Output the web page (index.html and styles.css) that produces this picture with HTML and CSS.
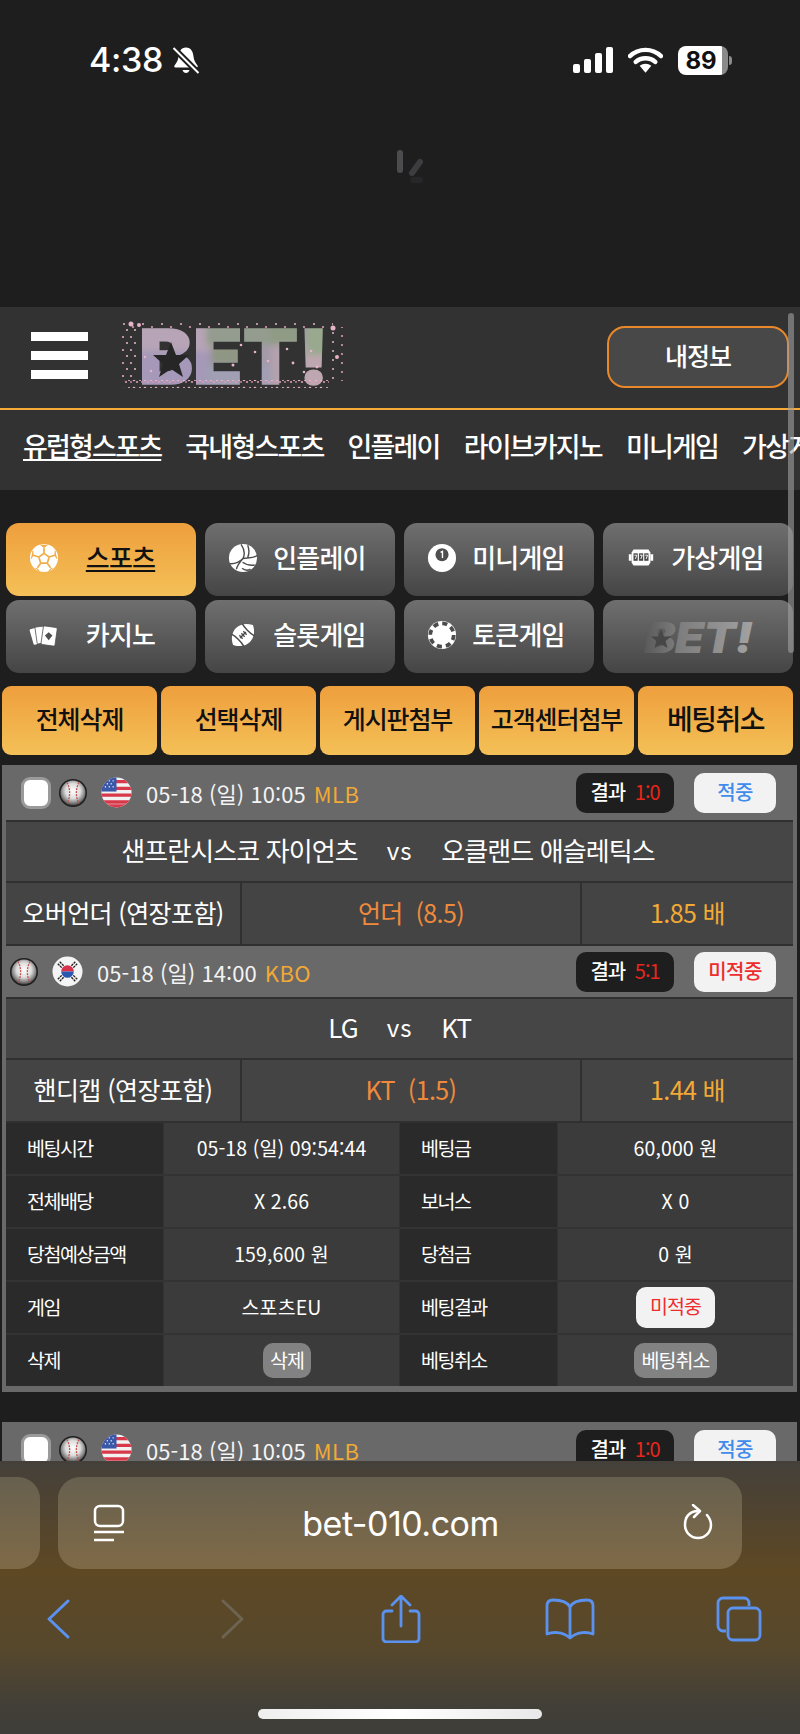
FILE: index.html
```html
<!DOCTYPE html>
<html lang="ko">
<head>
<meta charset="utf-8">
<title>BET</title>
<link rel="stylesheet" href="styles.css">
</head>
<body>
<svg class="defs" width="0" height="0" aria-hidden="true">
  <defs>
    <radialGradient id="bg" cx=".5" cy=".42" r=".6">
      <stop offset="0" stop-color="#fff"/>
      <stop offset=".5" stop-color="#dcdcdc"/>
      <stop offset=".8" stop-color="#808080"/>
      <stop offset="1" stop-color="#333"/>
    </radialGradient>
    <symbol id="ball" viewBox="0 0 28 28">
      <circle cx="14" cy="14" r="14" fill="#1f1f1f"/>
      <circle cx="14" cy="14" r="12.500" fill="url(#bg)"/>
      <path d="M8 3.500C11.500 10 11.500 18 8 24.500M20 3.500C16.500 10 16.500 18 20 24.500" fill="none" stroke="#c4534f" stroke-width="1.300" stroke-dasharray="2 1"/>
    </symbol>
    <symbol id="us" viewBox="0 0 32 32">
      <clipPath id="usc"><circle cx="16" cy="16" r="15.500"/></clipPath>
      <g clip-path="url(#usc)">
        <rect width="32" height="32" fill="#f2f2f2"/>
        <path d="M0 3h32v3.500H0zM0 10h32v3.500H0zM0 17h32v3.500H0zM0 24h32v3.500H0z" fill="#d8394a"/>
        <path d="M0 28h32v4H0z" fill="#d8394a"/>
        <rect width="16" height="15" fill="#3a58a8"/>
        <path d="M4 4h1M8 4h1M12 4h1M6 7h1M10 7h1M4 10h1M8 10h1M12 10h1" stroke="#fff" stroke-width="1.500"/>
      </g>
    </symbol>
    <symbol id="kr" viewBox="0 0 32 32">
      <circle cx="16" cy="16" r="15.500" fill="#f4f4f4"/>
      <path d="M9.500 16a6.500 6.500 0 0 1 13 0z" fill="#d8324a"/>
      <path d="M9.500 16a6.500 6.500 0 0 0 13 0z" fill="#2a58b0"/>
      <path d="M6 8l4 4M8 6l4 4M20 10l4-4M22 12l4-4M6 24l4-4M8 26l4-4M20 22l4 4M22 20l4 4" stroke="#222" stroke-width="1.400" stroke-dasharray="2.500 .8"/>
    </symbol>
    <filter id="soft" x="-10%" y="-10%" width="120%" height="120%"><feGaussianBlur stdDeviation="3"/></filter>
    <pattern id="photo" width="222" height="70" patternUnits="userSpaceOnUse">
      <rect width="222" height="70" fill="#a39aa8"/>
      <g filter="url(#soft)">
        <rect x="0" y="0" width="90" height="30" fill="#b7a4b6"/>
        <rect x="10" y="30" width="80" height="36" fill="#a598b8"/>
        <rect x="85" y="0" width="70" height="24" fill="#939c8e"/>
        <rect x="90" y="24" width="40" height="20" fill="#8f9684"/>
        <rect x="85" y="44" width="70" height="24" fill="#a09fb4"/>
        <rect x="150" y="0" width="30" height="24" fill="#8f9b84"/>
        <rect x="150" y="24" width="40" height="44" fill="#b3a2ae"/>
        <rect x="185" y="0" width="30" height="34" fill="#98a98e"/>
        <rect x="185" y="34" width="30" height="34" fill="#bfa7b1"/>
      </g>
    </pattern>
    <linearGradient id="gg" x1="0" x2="1" y1="0" y2="0">
      <stop offset="0" stop-color="#595959"/>
      <stop offset=".3" stop-color="#7c7c7c"/>
      <stop offset="1" stop-color="#a2a2a2"/>
    </linearGradient>
    <pattern id="p1" width="11" height="8" patternUnits="userSpaceOnUse">
      <circle cx="2" cy="3" r="1.300" fill="#e8a9c2"/><circle cx="5" cy="5" r="1.100" fill="#dc9ab4"/><circle cx="8" cy="3" r="1" fill="#f0c0d2"/><circle cx="10" cy="5" r=".9" fill="#d890ab"/>
    </pattern>
    <pattern id="p2" width="19" height="9" patternUnits="userSpaceOnUse">
      <circle cx="3" cy="3" r="1" fill="#e5b5c8"/><circle cx="12" cy="6" r="1.100" fill="#d99ab4"/>
    </pattern>
    <pattern id="p3" width="8" height="13" patternUnits="userSpaceOnUse">
      <circle cx="2" cy="3" r="1.100" fill="#dfa8bf"/><circle cx="6" cy="9" r="1" fill="#e9bbcd"/>
    </pattern>
  </defs>
</svg>

<div class="phone">
  <div class="status">
    <div class="status-row">
      <div class="status-left">
        <span class="clock">4:38</span>
        <svg class="bell" viewBox="0 0 28 28"><path d="M14 1c5 0 7 4 7.500 9 .4 4 2 6 4 9 .6 1 0 2-1 2H3.500c-1 0-1.600-1-1-2 2-3 3.600-5 4-9C7 5 9 1 14 1z" fill="#fff"/><path d="M10.500 23.500h7c-.5 2-2 3-3.500 3s-3-1-3.500-3z" fill="#fff"/><path d="M1 1l26 26" stroke="#1e1e1e" stroke-width="6"/><path d="M1.500 1.500l25 25" stroke="#fff" stroke-width="2"/></svg>
      </div>
      <div class="status-right">
        <svg class="signal" viewBox="0 0 40 26"><rect x="0" y="17" width="7" height="9" rx="2" fill="#fff"/><rect x="11" y="12" width="7" height="14" rx="2" fill="#fff"/><rect x="22" y="6" width="7" height="20" rx="2" fill="#fff"/><rect x="33" y="0" width="7" height="26" rx="2" fill="#fff"/></svg>
        <svg class="wifi" viewBox="0 0 36 26"><path d="M2 9c9-8.500 23-8.500 32 0M8 15c5.500-5 14.500-5 20 0" fill="none" stroke="#fff" stroke-width="4.500" stroke-linecap="round"/><path d="M12 19c3.500-3 8.500-3 12 0l-6 7z" fill="#fff"/></svg>
        <div class="battery"><span class="battery-body">89</span><span class="battery-nub"></span></div>
      </div>
    </div>
    <svg class="spinner" viewBox="0 0 34 34"><path d="M5 4v17" stroke="#4c4c4f" stroke-width="6" stroke-linecap="round"/><path d="M25 13l-8 11" stroke="#3d3d40" stroke-width="6" stroke-linecap="round"/><path d="M18 31h7" stroke="#272729" stroke-width="6" stroke-linecap="round"/></svg>
  </div>

  <header class="site">
    <div class="topbar">
      <div class="burger"><i></i><i></i><i></i></div>
      <svg class="logo" viewBox="0 0 222 70">
        <rect x="2" y="0" width="210" height="7" fill="url(#p2)"/>
        <rect x="0" y="6" width="16" height="52" fill="url(#p3)"/>
        <rect x="208" y="6" width="14" height="54" fill="url(#p2)"/>
        <text class="logo-text" x="18" y="63" textLength="190" lengthAdjust="spacingAndGlyphs" fill="url(#photo)" stroke="url(#photo)" stroke-width="1.500">BET!</text>
        <polygon points="50,21 55,34 68,34 58,43 62,56 50,48 38,56 42,43 32,34 45,34" fill="#262626"/>
        <rect x="3" y="59" width="205" height="8" fill="url(#p1)"/>
        <g fill="#e7b3c8">
          <circle cx="212" cy="7" r="2.500"/><circle cx="216" cy="36" r="2"/><circle cx="10" cy="3" r="2.500"/><circle cx="18" cy="4" r="2"/>
          <circle cx="120" cy="24" r="1.300"/><circle cx="134" cy="31" r="1.300"/><circle cx="112" cy="44" r="1.500"/><circle cx="147" cy="40" r="1.300"/>
          <circle cx="166" cy="28" r="1.300"/><circle cx="172" cy="42" r="1.400"/><circle cx="183" cy="51" r="1.300"/><circle cx="190" cy="30" r="1.300"/>
          <circle cx="196" cy="46" r="1.400"/><circle cx="30" cy="50" r="1.200"/><circle cx="24" cy="36" r="1.200"/>
        </g>
      </svg>
      <button class="myinfo">내정보</button>
    </div>
    <nav class="mainnav">
      <a class="on">유럽형스포츠</a><a>국내형스포츠</a><a>인플레이</a><a>라이브카지노</a><a>미니게임</a><a>가상게임</a>
    </nav>
  </header>

  <section class="tabs">
    <a class="tab active">
      <svg class="ti" viewBox="0 0 32 32"><circle cx="16" cy="16" r="15" fill="#fff"/><path d="M16 11l5.500 4-2 6.500h-7l-2-6.500zM16 11V5M21.500 15l6-2M19.500 21.500l3.500 5M12.500 21.500L9 26.500M10.500 15l-6-2" fill="none" stroke="#f0ad49" stroke-width="1.800"/><path d="M12 1.800l4 3 4-3M28 8l-.5 5 2.500 4M25 27l-2 .5-2 3M7 27l2 .5 2 3M4 8l.5 5L2 17" fill="#f0ad49" stroke="#f0ad49"/></svg>
      <span class="on">스포츠</span>
    </a>
    <a class="tab">
      <svg class="ti" viewBox="0 0 32 32"><circle cx="16" cy="16" r="15" fill="#fff"/><path d="M14 1.500c4 6 4 11 2 15M16 16.500c5-1 10 0 15-3M16 16.500c-4 4-9 6-14 5.500M21 2.500c2 5 1.500 9.500 0 13M28.500 23.500c-4 .5-9 0-13-3M9 28c.5-3 3-7 7-11.500M24 28c-2 1-6 1.500-9-1" fill="none" stroke="#4c4c4c" stroke-width="1.500"/></svg>
      <span>인플레이</span>
    </a>
    <a class="tab">
      <svg class="ti" viewBox="0 0 32 32"><circle cx="16" cy="16" r="15" fill="#fff"/><circle cx="16" cy="12.500" r="7" fill="#4e4e4e"/><path d="M14.500 10l2-1v7" fill="none" stroke="#fff" stroke-width="1.500"/></svg>
      <span>미니게임</span>
    </a>
    <a class="tab">
      <svg class="ti" viewBox="0 0 32 32"><path d="M8 7h16l2 3v11l-2 3H8l-2-3V10z" fill="#fff"/><path d="M3 12h3v7H3zM26 12h3v7h-3z" fill="#fff"/><rect x="8" y="11" width="4.500" height="8" fill="#4a4a4a"/><rect x="13.800" y="11" width="4.500" height="8" fill="#4a4a4a"/><rect x="19.500" y="11" width="4.500" height="8" fill="#4a4a4a"/><path d="M9 13h2.500l-1.500 4M14.800 13h2.500l-1.500 4M20.500 13h2.500l-1.500 4" fill="none" stroke="#fff" stroke-width="1"/></svg>
      <span>가상게임</span>
    </a>
    <a class="tab">
      <svg class="ti" viewBox="0 0 32 32"><rect x="2.500" y="9" width="8" height="17" rx="1" transform="rotate(-16 6 17)" fill="#fff"/><rect x="7.500" y="7" width="9" height="18" rx="1" transform="rotate(-8 12 16)" fill="#fff" stroke="#505050" stroke-width=".8"/><rect x="14" y="7" width="15" height="20" rx="1.500" transform="rotate(8 21 17)" fill="#fff" stroke="#505050" stroke-width=".8"/><path d="M21 13l4 3.500-4 5-4-5z" fill="#4f4f4f"/></svg>
      <span>카지노</span>
    </a>
    <a class="tab">
      <svg class="ti" viewBox="0 0 32 32"><g transform="rotate(-45 16 16)"><path d="M1 16C5 8 11 5.500 16 5.500S27 8 31 16c-4 8-10 10.500-15 10.500S5 24 1 16z" fill="#fff"/><path d="M8 6.800c1.500 5 1.500 13.500 0 18.400M24 6.800c-1.500 5-1.500 13.500 0 18.400" stroke="#4c4c4c" stroke-width="1.600" fill="none"/><path d="M11.500 16h9M13 13.500v5M16 13.500v5M19 13.500v5" stroke="#4c4c4c" stroke-width="1.500"/></g></svg>
      <span>슬롯게임</span>
    </a>
    <a class="tab">
      <svg class="ti" viewBox="0 0 32 32"><circle cx="16" cy="16" r="15" fill="#fff"/><circle cx="16" cy="16" r="12.500" fill="none" stroke="#4c4c4c" stroke-width="4" stroke-dasharray="5.500 4.300"/><circle cx="16" cy="16" r="8.500" fill="#fff"/></svg>
      <span>토큰게임</span>
    </a>
    <a class="tab tab-logo">
      <svg class="tab-brand" viewBox="0 0 112 34"><text class="logo-text brand-text" x="2" y="32" textLength="108" lengthAdjust="spacingAndGlyphs" fill="url(#gg)">BET!</text><polygon points="19,8 22,15.500 29,15.500 23.500,20 25.500,27 19,23 12.500,27 14.500,20 9,15.500 16,15.500" fill="#474747"/></svg>
    </a>
  </section>

  <section class="actions">
    <button class="act">전체삭제</button>
    <button class="act">선택삭제</button>
    <button class="act">게시판첨부</button>
    <button class="act">고객센터첨부</button>
    <button class="act act-big">베팅취소</button>
  </section>

  <article class="card">
    <div class="mhead">
      <span class="check"></span>
      <svg class="mball"><use href="#ball"/></svg>
      <svg class="mflag"><use href="#us"/></svg>
      <span class="mtime">05-18 (일) 10:05</span>
      <span class="mleague">MLB</span>
      <span class="mscore">결과 <b>1:0</b></span>
      <span class="mstate win">적중</span>
    </div>
    <div class="rows">
      <div class="teams"><span class="home">샌프란시스코 자이언츠</span><em>vs</em><span>오클랜드 애슬레틱스</span></div>
      <div class="market"><span>오버언더 (연장포함)</span><span class="pick">언더&nbsp; (8.5)</span><span class="odds">1.85 배</span></div>
    </div>
    <div class="mhead mhead-2">
      <svg class="mball first"><use href="#ball"/></svg>
      <svg class="mflag"><use href="#kr"/></svg>
      <span class="mtime">05-18 (일) 14:00</span>
      <span class="mleague">KBO</span>
      <span class="mscore">결과 <b>5:1</b></span>
      <span class="mstate lose">미적중</span>
    </div>
    <div class="rows">
      <div class="teams"><span class="home">LG</span><em>vs</em><span>KT</span></div>
      <div class="market"><span>핸디캡 (연장포함)</span><span class="pick">KT&nbsp; (1.5)</span><span class="odds">1.44 배</span></div>
    </div>
    <div class="detail">
      <div class="dl">베팅시간</div><div class="dv">05-18 (일) 09:54:44</div><div class="dl">베팅금</div><div class="dv">60,000 원</div>
      <div class="dl">전체배당</div><div class="dv">X 2.66</div><div class="dl">보너스</div><div class="dv">X 0</div>
      <div class="dl">당첨예상금액</div><div class="dv">159,600 원</div><div class="dl">당첨금</div><div class="dv">0 원</div>
      <div class="dl">게임</div><div class="dv">스포츠EU</div><div class="dl">베팅결과</div><div class="dv"><span class="pill-lose">미적중</span></div>
      <div class="dl">삭제</div><div class="dv"><span class="pill-gray pill-del">삭제</span></div><div class="dl">베팅취소</div><div class="dv"><span class="pill-gray">베팅취소</span></div>
    </div>
  </article>

  <article class="card card-next">
    <div class="mhead">
      <span class="check"></span>
      <svg class="mball"><use href="#ball"/></svg>
      <svg class="mflag"><use href="#us"/></svg>
      <span class="mtime">05-18 (일) 10:05</span>
      <span class="mleague">MLB</span>
      <span class="mscore">결과 <b>1:0</b></span>
      <span class="mstate win">적중</span>
    </div>
  </article>

  <div class="scrollbar"></div>

  <div class="safari">
    <div class="urlrow">
      <div class="pill-prev"></div>
      <div class="pill-url">
        <svg class="reader" viewBox="0 0 32 38"><rect x="2" y="2" width="28" height="20" rx="5" fill="none" stroke="#fff" stroke-width="2.500"/><path d="M1 28h30M1 36h20" stroke="#fff" stroke-width="2.500"/></svg>
        <span class="url">bet-010.com</span>
        <svg class="reload" viewBox="0 0 32 38"><path d="M15 7C7.500 8 3 13 3 21c0 7 5.500 13 13 13s13-6 13-13c0-4-1.500-7-4-10" fill="none" stroke="#fff" stroke-width="2.500" stroke-linecap="round"/><path d="M11 1l7 6-6 6" fill="none" stroke="#fff" stroke-width="2.500" stroke-linecap="round" stroke-linejoin="round"/></svg>
      </div>
    </div>
    <div class="tools">
      <svg class="tool" viewBox="0 0 46 48"><path d="M33 6L14 24l19 18" fill="none" stroke="#5b92f0" stroke-width="3" stroke-linecap="round" stroke-linejoin="round"/></svg>
      <svg class="tool tool-fwd" viewBox="0 0 46 48"><path d="M13 6l19 18-19 18" fill="none" stroke="#6e6452" stroke-width="3" stroke-linecap="round" stroke-linejoin="round"/></svg>
      <svg class="tool" viewBox="0 0 46 48"><path d="M14 16H8.500a3.500 3.500 0 0 0-3.500 3.500V43.500A3.500 3.500 0 0 0 8.500 47h29a3.500 3.500 0 0 0 3.500-3.500V19.500a3.500 3.500 0 0 0-3.500-3.500H32M23 31V2M14 10l9-9 9 9" fill="none" stroke="#5b92f0" stroke-width="2.800" stroke-linecap="round" stroke-linejoin="round"/></svg>
      <svg class="tool tool-book" viewBox="0 0 50 42"><path d="M25 9C22 3 15 2 8 2 4.500 2 2 4 2 8v28c5-2 15-3 23 4 8-7 18-6 23-4V8c0-4-2.500-6-6-6-7 0-14 1-17 7zM25 9v31" fill="none" stroke="#5b92f0" stroke-width="2.800" stroke-linejoin="round"/></svg>
      <svg class="tool" viewBox="0 0 46 46"><path d="M10 35H7a5 5 0 0 1-5-5V7a5 5 0 0 1 5-5h21a5 5 0 0 1 5 5v3" fill="none" stroke="#5b92f0" stroke-width="2.800"/><rect x="12" y="12" width="32" height="32" rx="5" fill="none" stroke="#5b92f0" stroke-width="2.800"/></svg>
    </div>
    <div class="homebar"></div>
  </div>
</div>
</body>
</html>
```
FILE: styles.css
```css
* { box-sizing: border-box; margin: 0; padding: 0; }
html, body { width: 800px; height: 1734px; overflow: hidden; background: #1e1e1e; }
body { font-family: "Noto Sans CJK KR", "Noto Sans", sans-serif; color: #fff; }
.defs { position: absolute; }
.phone { position: relative; width: 800px; height: 1734px; overflow: hidden; background: #1e1e1e; }

/* status area */
.status { height: 307px; padding: 44px 68px 0 89px; }
.status-row { display: flex; justify-content: space-between; align-items: center; height: 32px; }
.status-left { display: flex; align-items: center; gap: 9px; }
.clock { font: 500 34px/32px "Inter", "Liberation Sans", sans-serif; letter-spacing: -.3px; }
.bell { width: 28px; height: 29px; }
.status-right { display: flex; align-items: center; }
.signal { width: 40px; height: 26px; margin-right: 15px; }
.wifi { width: 35px; height: 26px; margin-right: 15px; }
.battery { display: flex; align-items: center; }
.battery-body { width: 50px; height: 29px; border-radius: 8px; background: linear-gradient(90deg, #fff 88%, #8a8a8a 88%); color: #111; font: 700 24px/29px "Inter", "Liberation Sans", sans-serif; text-align: center; padding-right: 4px; }
.battery-nub { width: 3px; height: 9px; background: #8a8a8a; border-radius: 0 3px 3px 0; margin-left: 1px; }
.spinner { display: block; width: 34px; height: 34px; margin: 73px 0 0 306px; }

/* header */
.site { background: #323232; height: 183px; }
.topbar { display: flex; align-items: center; height: 103px; padding: 0 11px 2px 31px; border-bottom: 2px solid #f5ab35; }
.burger { display: flex; flex-direction: column; gap: 10px; width: 57px; margin-top: -2px; }
.burger i { display: block; height: 9px; background: #fff; }
.logo { width: 222px; height: 70px; margin-left: 33px; margin-top: -1px; overflow: visible; }
.logo-text { font: 900 76px "Inter", "Liberation Sans", sans-serif; }
.brand-text { font-size: 42px; font-style: italic; }
.myinfo { margin-left: auto; width: 182px; height: 62px; padding-bottom: 4px; background: #484848; border: 2.500px solid #e8882a; border-radius: 18px; color: #fff; font: 500 25px "Noto Sans CJK KR", sans-serif; letter-spacing: -1px; }
.mainnav { display: flex; align-items: center; gap: 24px; height: 80px; padding: 0 0 10px 23px; white-space: nowrap; overflow: hidden; }
.mainnav a { font-size: 27px; font-weight: 500; letter-spacing: -1.800px; color: #fff; }
.mainnav a.on { text-decoration: underline; text-underline-offset: 2px; text-decoration-thickness: 1.500px; }

/* tabs */
.tabs { display: grid; grid-template-columns: repeat(4, 190px); grid-auto-rows: 73px; column-gap: 9px; row-gap: 4px; margin-top: 33px; padding-left: 6px; }
.tab { display: flex; align-items: center; padding: 0 10px 0 23px; border-radius: 13px; background: linear-gradient(180deg, #6f6f6f, #454545); color: #fff; font-size: 26px; font-weight: 500; letter-spacing: -.8px; }
.tab span { flex: 1; text-align: center; padding-bottom: 6px; margin-left: -4px; }
.ti { width: 30px; height: 30px; flex: none; margin-top: -4px; }
.tab.active { background: linear-gradient(180deg, #ee9f3d, #f4c057); color: #111; }
.tab span.on { text-decoration: underline; text-underline-offset: 2px; }
.tab-logo { justify-content: center; padding: 0; }
.tab-brand { width: 112px; height: 34px; margin-top: 3px; overflow: visible; }

/* actions */
.actions { display: grid; grid-template-columns: repeat(5, 155px); column-gap: 4px; margin-top: 13px; padding-left: 2px; }
.act { height: 69px; padding: 0 0 6px; border: 0; border-radius: 9px; background: linear-gradient(180deg, #ee9f3d, #f4c057); color: #111; font: 500 25px "Noto Sans CJK KR", sans-serif; letter-spacing: -1.100px; white-space: nowrap; }
.act-big { font-size: 28px; letter-spacing: -1.500px; }

/* card */
.card { margin: 10px 3px 0 2px; padding: 0 4px 6px; background: #696969; }
.mhead { display: flex; align-items: center; height: 55px; padding-left: 15px; padding-right: 17px; background: #696969; }
.mhead-2 { height: 51px; padding-left: 4px; }
.check { width: 30px; height: 32px; border-radius: 9px; background: #fff; border: 3px solid #9a9a9a; margin-right: 8px; }
.mball { width: 28px; height: 28px; margin-right: 14px; }
.mflag { width: 31px; height: 31px; margin-right: 14px; }
.mtime { font-size: 22px; letter-spacing: .05px; color: #f4f4f4; white-space: nowrap; }
.mleague { font-size: 22px; color: #f2a935; margin-left: 8px; letter-spacing: .5px; }
.mscore { margin-left: auto; width: 98px; height: 40px; line-height: 38px; border-radius: 10px; background: #1e1e1e; font-size: 20px; font-weight: 500; letter-spacing: -1px; text-align: center; white-space: nowrap; }
.mscore b { font-weight: 400; color: #e8261c; margin-left: 5px; }
.mstate { width: 82px; height: 40px; line-height: 38px; margin-left: 20px; border-radius: 10px; background: #f2f2f2; font-size: 20px; font-weight: 500; letter-spacing: -.6px; text-align: center; }
.win { color: #3f8cec; }
.lose { color: #ee2c2c; }
.rows { display: flex; flex-direction: column; gap: 2px; background: #303030; border: solid #303030; border-width: 2px 0 2px; }
.teams { display: grid; grid-template-columns: 1fr auto 1fr; align-items: center; column-gap: 29px; height: 59px; padding-bottom: 4px; background: #464646; font-size: 26px; letter-spacing: -.9px; white-space: nowrap; }
.teams .home { justify-self: end; }
.teams em { font-style: normal; font-size: 24px; letter-spacing: .8px; }
.market { display: grid; grid-template-columns: 234px 338px 1fr; column-gap: 2px; height: 61px; background: #303030; font-size: 25px; letter-spacing: -.6px; }
.market span { display: flex; align-items: center; justify-content: center; padding-bottom: 3px; background: #444; white-space: nowrap; }
.market .pick { color: #ef8a3c; }
.market .odds { color: #f2a935; }
.detail { display: grid; grid-template-columns: 157px 235px 157px 1fr; grid-auto-rows: 51px; column-gap: 1px; row-gap: 2px; background: #333; font-size: 19.500px; letter-spacing: -1.500px; }
.dl { display: flex; align-items: center; padding: 0 0 2px 21px; background: #2a2a2a; }
.dv { display: flex; align-items: center; justify-content: center; padding-bottom: 2px; background: #3b3b3b; letter-spacing: .1px; }
.pill-lose { padding: 0 14px; height: 41px; line-height: 38px; border-radius: 10px; background: #f2f2f2; color: #ee2c2c; letter-spacing: -1px; margin-top: 2px; }
.pill-gray { padding: 0 7px; height: 35px; line-height: 33px; border-radius: 10px; background: #828282; color: #fff; letter-spacing: -.9px; margin-top: 2px; }
.pill-del { margin-left: 11px; }
.card-next { margin-top: 30px; padding-bottom: 0; }

/* scrollbar */
.scrollbar { position: absolute; left: 788px; top: 313px; width: 6px; height: 340px; border-radius: 3px; background: rgba(160,160,160,.6); }

/* safari */
.safari { position: absolute; left: 0; right: 0; bottom: 0; height: 273px; padding-top: 16px; background: linear-gradient(180deg, #44403a 0%, #5e4824 40%, #57482c 68%, #423f38 90%, #403e3a 100%); }
.urlrow { display: flex; gap: 18px; height: 92px; }
.pill-prev { width: 40px; border-radius: 0 22px 22px 0; background: linear-gradient(180deg, #67604f, #7f6a47); }
.pill-url { display: flex; align-items: center; justify-content: space-between; width: 684px; padding: 0 28px 0 35px; border-radius: 22px; background: linear-gradient(180deg, #67604f, #7f6a47); }
.reader { width: 32px; height: 38px; }
.reload { width: 32px; height: 38px; }
.url { margin-right: 6px; font: 400 34px "Inter", "Liberation Sans", sans-serif; letter-spacing: -.5px; }
.tools { display: flex; justify-content: space-between; align-items: center; height: 50px; margin-top: 25px; padding: 0 38px 0 35px; }
.tool { width: 46px; height: 48px; }
.tool-fwd { margin-left: 8px; }
.tool-book { width: 50px; }
.homebar { width: 284px; height: 10px; margin: 65px auto 0; border-radius: 5px; background: linear-gradient(90deg, #eee, #fff 50%, #e8e8e8); }
```
